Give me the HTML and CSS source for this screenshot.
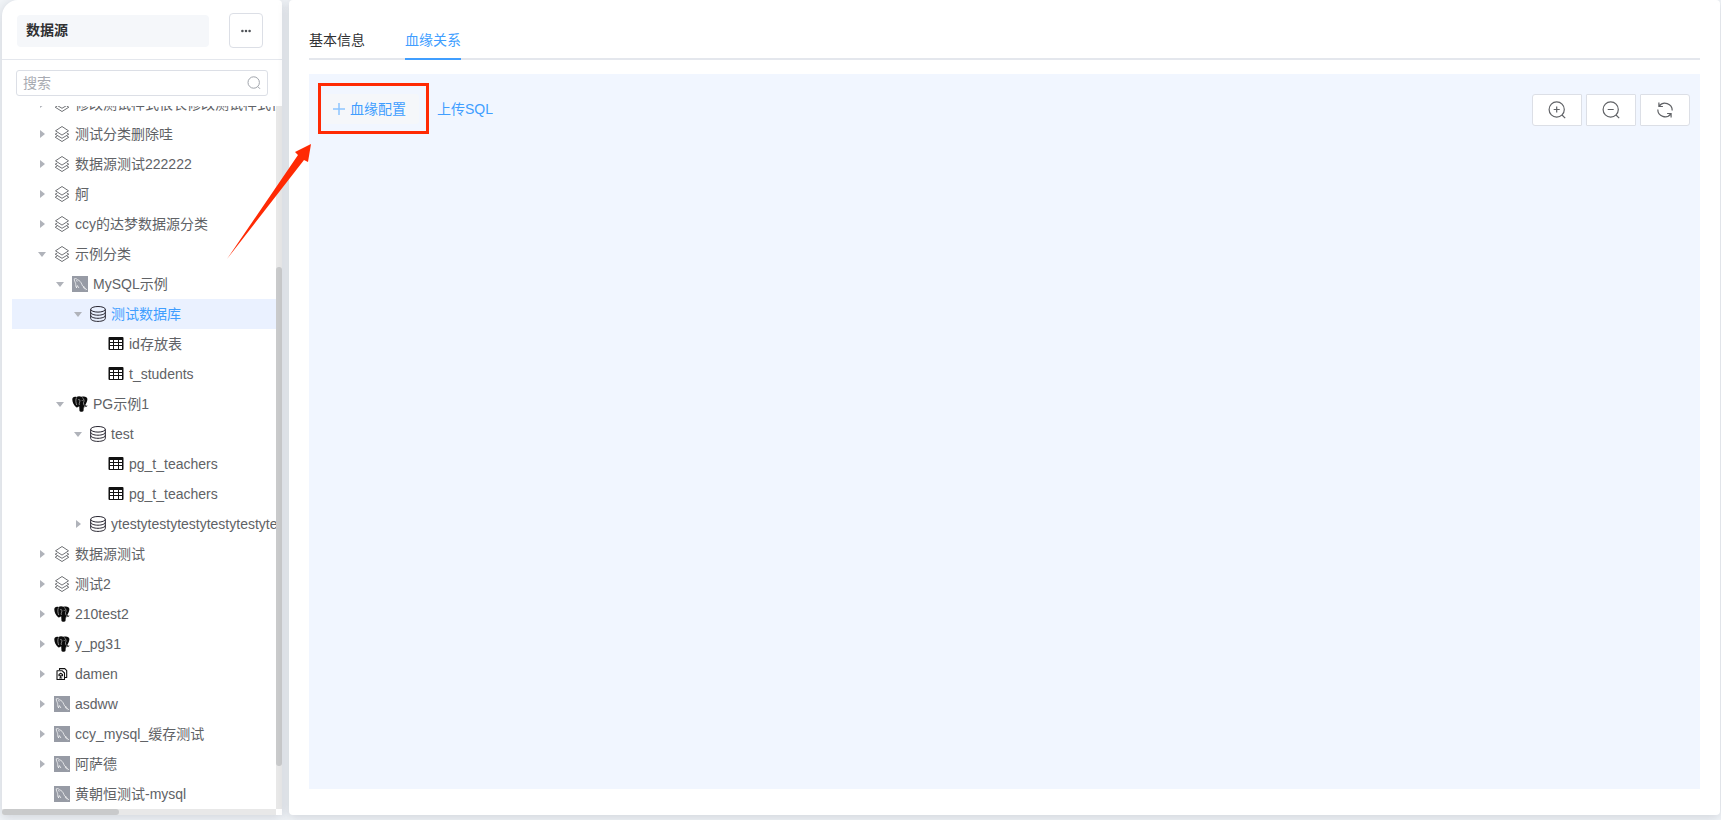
FILE: index.html
```html
<!DOCTYPE html>
<html lang="zh-CN">
<head>
<meta charset="utf-8">
<title>数据源</title>
<link rel="stylesheet" href="styles.css">
</head>
<body>
<svg class="sprite" aria-hidden="true">
  <symbol id="layers" viewBox="0 0 16 16"><g fill="none" stroke="#606266" stroke-width=".9" stroke-linejoin="round"><path d="M8 .5l6.500 4.300L8 9.100 1.500 4.800z"/><path d="M3.200 7L1.200 8.200 8 12.300l6.800-4.100-2-1.200M3.200 10l-2 1.200L8 15.500l6.800-4.300-2-1.200"/></g></symbol>
  <symbol id="db" viewBox="0 0 16 16"><g fill="none" stroke="#26242f" stroke-width="1"><ellipse cx="8" cy="3.300" rx="7.300" ry="2.800"/><path d="M.7 3.300v9.200c0 1.600 3.200 2.900 7.300 2.900s7.300-1.300 7.300-2.900V3.300M.7 6.300c0 1.600 3.200 2.900 7.300 2.900s7.300-1.300 7.300-2.900M.7 9.400c0 1.600 3.200 2.900 7.300 2.900s7.300-1.300 7.300-2.900"/></g></symbol>
  <symbol id="table" viewBox="0 0 16 16"><path fill="#111" fill-rule="evenodd" d="M1.500 1h13q1 0 1 1v11q0 1-1 1h-13q-1 0-1-1V2q0-1 1-1zM2 4v2h3V4zm4 0v2h4V4zm5 0v2h3V4zM2 7v2h3V7zm4 0v2h4V7zm5 0v2h3V7zM2 10v3h3v-3zm4 0v3h4v-3zm5 0v3h3v-3z"/></symbol>
  <symbol id="mysql" viewBox="0 0 16 16"><path fill="#979ba5" d="M0 0h16v16H0z"/><path fill="none" stroke="#fff" stroke-width=".7" stroke-linecap="round" stroke-linejoin="round" d="M4.500 11.700C3.200 10.400 4 8.900 3.600 7.300 3.200 5.800 2 4.500 2.300 2.800c1.200-.6 2.400 0 3.300 1 2 .5 3.400 2.400 4.200 4.400.5 1.400 1 2.400 2.900 3-.6.600.8 1.200 2 2.400M4.500 11.700l.8-2.200 1.400 2.200M11.200 10.600c-.4.700.8 1.600 2 2.800M4.600 4.600l.4.700"/></symbol>
  <symbol id="pg" viewBox="0 0 16 16"><path fill="#0b0b0b" d="M.3 3.500C.3 1.200 2 .3 4.400.9 6 .1 8 .1 9.500.8c2.700-1 5.800-.2 5.900 2.200 0 1.700-1 4.200-2.100 5.900.2.700 1 .8 2.200.7-.4 1.200-2 1.900-3.700 1.700l-.3 3.400c-.2 1.200-3.400 1.500-4 .3l-.3-4.700c-1.400 1.400-2.900 1.500-3.500.4C1.700 9.100.4 5.900.3 3.500z"/><path fill="none" stroke="#bbb" stroke-width=".7" d="M4.600 1.400C3.300 3.500 3.900 7 4.700 9M6 4c.9-.9 1.800-.6 1.900.7.100 1.700-1.200 2.500-.5 4.200M10.200 1.500c1.900 1.300 2.300 3.600 1.300 5.200-.2 1 .3 2 .8 2.800M9.700 4.400l1 .1M12 10.500l1.800-.2"/></symbol>
  <symbol id="dm" viewBox="0 0 16 16"><g fill="none" stroke="#111" stroke-width="1.100" stroke-linejoin="round"><path d="M5.500 4V2.600h5.300l1.900 2v6.900h-1.700"/><path d="M3 4.700h5L10.500 7v6.500H3z"/><path d="M5 9.800V8.500l1.700-1.300 1.800 1.300v1.300zM6.700 9.800v2.400M5.200 12h3"/></g></symbol>
</svg>

<div class="app">
  <aside class="sidebar">
    <header class="side-head">
      <h1 class="side-title">数据源</h1>
      <button class="more" type="button" aria-label="更多"><svg viewBox="0 0 16 16"><g fill="#505358"><circle cx="3.200" cy="8" r="1.700"/><circle cx="8" cy="8" r="1.700"/><circle cx="12.800" cy="8" r="1.700"/></g></svg></button>
    </header>
    <div class="search">
      <input type="text" placeholder="搜索" aria-label="搜索">
      <svg viewBox="0 0 16 16"><g fill="none" stroke="#a0a4ab" stroke-width="1"><circle cx="7.700" cy="7.500" r="5.700"/><path d="M11.800 11.600l2.200 2.200"/></g></svg>
    </div>
    <div class="tree-area">
      <div class="tree-view">
        <ul class="tree">
          <li class="node l1"><i class="caret"></i><svg class="ico"><use href="#layers"/></svg><span>修改测试样式很长修改测试样式很长</span></li>
          <li class="node l1"><i class="caret"></i><svg class="ico"><use href="#layers"/></svg><span>测试分类删除哇</span></li>
          <li class="node l1"><i class="caret"></i><svg class="ico"><use href="#layers"/></svg><span>数据源测试222222</span></li>
          <li class="node l1"><i class="caret"></i><svg class="ico"><use href="#layers"/></svg><span>舸</span></li>
          <li class="node l1"><i class="caret"></i><svg class="ico"><use href="#layers"/></svg><span>ccy的达梦数据源分类</span></li>
          <li class="node l1"><i class="caret open"></i><svg class="ico"><use href="#layers"/></svg><span>示例分类</span></li>
          <li class="node l2"><i class="caret open"></i><svg class="ico"><use href="#mysql"/></svg><span>MySQL示例</span></li>
          <li class="node l3 current"><i class="caret open"></i><svg class="ico"><use href="#db"/></svg><span>测试数据库</span></li>
          <li class="node l4"><i class="caret leaf"></i><svg class="ico"><use href="#table"/></svg><span>id存放表</span></li>
          <li class="node l4"><i class="caret leaf"></i><svg class="ico"><use href="#table"/></svg><span>t_students</span></li>
          <li class="node l2"><i class="caret open"></i><svg class="ico"><use href="#pg"/></svg><span>PG示例1</span></li>
          <li class="node l3"><i class="caret open"></i><svg class="ico"><use href="#db"/></svg><span>test</span></li>
          <li class="node l4"><i class="caret leaf"></i><svg class="ico"><use href="#table"/></svg><span>pg_t_teachers</span></li>
          <li class="node l4"><i class="caret leaf"></i><svg class="ico"><use href="#table"/></svg><span>pg_t_teachers</span></li>
          <li class="node l3"><i class="caret"></i><svg class="ico"><use href="#db"/></svg><span>ytestytestytestytestytestytestytest</span></li>
          <li class="node l1"><i class="caret"></i><svg class="ico"><use href="#layers"/></svg><span>数据源测试</span></li>
          <li class="node l1"><i class="caret"></i><svg class="ico"><use href="#layers"/></svg><span>测试2</span></li>
          <li class="node l1"><i class="caret"></i><svg class="ico"><use href="#pg"/></svg><span>210test2</span></li>
          <li class="node l1"><i class="caret"></i><svg class="ico"><use href="#pg"/></svg><span>y_pg31</span></li>
          <li class="node l1"><i class="caret"></i><svg class="ico"><use href="#dm"/></svg><span>damen</span></li>
          <li class="node l1"><i class="caret"></i><svg class="ico"><use href="#mysql"/></svg><span>asdww</span></li>
          <li class="node l1"><i class="caret"></i><svg class="ico"><use href="#mysql"/></svg><span>ccy_mysql_缓存测试</span></li>
          <li class="node l1"><i class="caret"></i><svg class="ico"><use href="#mysql"/></svg><span>阿萨德</span></li>
          <li class="node l1"><i class="caret leaf"></i><svg class="ico"><use href="#mysql"/></svg><span>黄朝恒测试-mysql</span></li>
        </ul>
      </div>
      <div class="bar-v"><div class="thumb-v"></div></div>
      <div class="bar-h"><div class="thumb-h"></div></div>
    </div>
  </aside>

  <main class="main">
    <nav class="tabs">
      <button class="tab" type="button">基本信息</button>
      <button class="tab active" type="button">血缘关系</button>
    </nav>
    <section class="canvas">
      <div class="actions">
        <div class="marked">
          <button class="link-btn hovered" type="button"><svg viewBox="0 0 12 12"><path d="M6 0v12M0 6h12" stroke="#8cc5ff" stroke-width="1.500"/></svg><span>血缘配置</span></button>
          <svg class="arrow" viewBox="0 0 86 118" aria-hidden="true"><path fill="#ff2a04" d="M0 115L71 11l-3-3L84 0l-3 18-4-2z"/></svg>
        </div>
        <button class="link-btn" type="button">上传SQL</button>
      </div>
      <div class="zooms">
        <button type="button" aria-label="放大"><svg viewBox="0 0 18 18"><g fill="none" stroke="#606266" stroke-width="1.200"><circle cx="8.700" cy="8.500" r="7.600"/><path d="M14 14l3.200 3.200M8.700 5.500v6M5.700 8.500h6"/></g></svg></button>
        <button type="button" aria-label="缩小"><svg viewBox="0 0 18 18"><g fill="none" stroke="#606266" stroke-width="1.200"><circle cx="8.700" cy="8.500" r="7.600"/><path d="M14 14l3.200 3.200M5.700 8.500h6"/></g></svg></button>
        <button type="button" aria-label="刷新"><svg viewBox="0 0 18 18"><g fill="none" stroke="#606266" stroke-width="1.200"><path d="M2.900 1.500v4h4M3.200 5.200A7.200 7.200 0 0 1 16.200 9.500M15.100 16.500v-4h-4M14.800 12.800A7.200 7.200 0 0 1 1.800 8.500"/></g></svg></button>
      </div>
    </section>
  </main>
</div>
</body>
</html>
```
FILE: styles.css
```css
* { box-sizing: border-box; }
body {
  margin: 0;
  background: #f2f5f8;
  color: #606266;
  font: 14px/20px "Liberation Sans", Arial, "Noto Sans CJK SC", sans-serif;
}
button, input { font: inherit; margin: 0; padding: 0; }
button { border: 0; background: none; cursor: pointer; }
.sprite { display: none; }

.app {
  display: flex;
  gap: 7px;
  height: 100vh;
  padding: 0 1px 5px 2px;
  overflow: hidden;
}
.sidebar, .main {
  background: #fff;
  box-shadow: 0 2px 12px rgba(40, 50, 80, .18);
}
.sidebar {
  display: flex;
  flex-direction: column;
  flex: none;
  width: 280px;
  border-radius: 16px 4px 0 0;
}
.side-head {
  display: flex;
  align-items: center;
  justify-content: space-between;
  height: 60px;
  padding: 2px 19px 0 15px;
  border-bottom: 1px solid #e4e7ed;
}
.side-title {
  width: 192px;
  margin: 0;
  padding: 5px 9px 7px;
  border-radius: 4px;
  background: #f5f7fa;
  color: #303133;
  font-size: 14px;
  line-height: 20px;
  font-weight: 700;
}
.more {
  display: grid;
  place-items: center;
  width: 34px;
  height: 35px;
  border: 1px solid #dcdfe6;
  border-radius: 4px;
}
.more svg { width: 12px; height: 12px; }
.search {
  display: flex;
  align-items: center;
  height: 26px;
  margin: 10px 14px;
  padding: 0 5px 0 6px;
  border: 1px solid #dcdfe6;
  border-radius: 3px;
}
.search input {
  flex: 1;
  min-width: 0;
  height: 24px;
  border: 0;
  outline: 0;
  background: none;
}
.search input::placeholder { color: #a8abb2; }
.search svg { width: 16px; height: 16px; }

.tree-area {
  display: grid;
  grid-template: minmax(0, 1fr) 6px / minmax(0, 1fr) 6px;
  flex: 1;
  min-height: 0;
}
.tree-view { overflow: hidden; }
.tree {
  margin: -17px 0 0;
  padding: 0 0 0 10px;
  list-style: none;
}
.node {
  display: flex;
  align-items: center;
  height: 30px;
  white-space: nowrap;
}
.l1 { padding-left: 18px; }
.l2 { padding-left: 36px; }
.l3 { padding-left: 54px; }
.l4 { padding-left: 72px; }
.current { background: #eaf1ff; color: #409eff; }
.caret {
  display: grid;
  place-items: center;
  flex: none;
  width: 24px;
  height: 24px;
}
.caret::before {
  content: "";
  border-style: solid;
  border-width: 4px 0 4px 5px;
  border-color: transparent transparent transparent #b0b3ba;
}
.caret.open::before {
  border-width: 5px 4px 0;
  border-color: #b0b3ba transparent transparent;
}
.caret.leaf::before { display: none; }
.ico { flex: none; width: 16px; height: 16px; margin-right: 5px; }
.bar-v { padding-top: 161px; background: #e8e8e8; }
.thumb-v { height: 499px; border-radius: 3px; background: #c9cacb; }
.bar-h { background: #e8e8e8; }
.thumb-h { width: 117px; height: 6px; border-radius: 3px; background: #c9cacb; }

.main {
  display: flex;
  flex-direction: column;
  flex: 1;
  min-width: 0;
  padding: 20px 20px 26px;
  border-radius: 4px;
}
.tabs {
  display: flex;
  gap: 40px;
  height: 40px;
  border-bottom: 2px solid #e4e7ed;
}
.tab {
  height: 40px;
  padding-top: 2px;
  color: #303133;
  border-bottom: 2px solid transparent;
}
.tab.active { color: #409eff; border-color: #409eff; }
.canvas {
  display: flex;
  align-items: flex-start;
  justify-content: space-between;
  flex: 1;
  margin-top: 14px;
  padding: 9px 10px 0 9px;
  background: #f1f6ff;
}
.actions { display: flex; align-items: center; gap: 8px; }
.marked {
  position: relative;
  padding: 8px 7px 7px 2px;
  border: 3px solid #ff2a04;
}
.link-btn { display: flex; align-items: center; gap: 5px; color: #409eff; }
.link-btn svg { width: 12px; height: 12px; }
.hovered {
  height: 30px;
  padding: 0 13px 0 10px;
  border-radius: 3px;
  background: #f5f7fa;
}
.arrow {
  position: absolute;
  left: -94px;
  top: 58px;
  width: 86px;
  height: 118px;
}
.zooms { display: flex; gap: 4px; margin-top: 11px; }
.zooms button {
  display: grid;
  place-items: center;
  width: 50px;
  height: 32px;
  border: 1px solid #dcdfe6;
  border-radius: 1px;
  background: #fff;
}
.zooms button:first-child { border-radius: 3px 1px 1px 3px; }
.zooms button:last-child { border-radius: 1px 3px 3px 1px; }
.zooms svg { width: 18px; height: 18px; }
```
